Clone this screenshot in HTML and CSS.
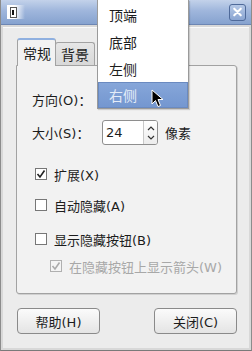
FILE: index.html
```html
<!DOCTYPE html>
<html>
<head>
<meta charset="utf-8">
<link rel="stylesheet" href="styles.css">
</head>
<body>
<div class="window">
  <div class="titlebar">
    <div class="app-icon"><span></span></div>
    <div class="close-btn">
      <svg width="16" height="16" viewBox="0 0 16 16"><path d="M4.5 4.5 L11.5 11.5 M11.5 4.5 L4.5 11.5" stroke="#fff" stroke-width="2.2" stroke-linecap="round"/></svg>
    </div>
  </div>
  <div class="frame">
    <div class="content">
      <div class="tabs">
        <div class="tab active">常规</div>
        <div class="tab">背景</div>
      </div>
      <div class="panel">
        <div class="row r1"><span class="label">方向(O)：</span></div>
        <div class="row r2">
          <span class="label">大小(S)：</span>
          <div class="spin">
            <span class="spin-val">24</span>
            <div class="spin-btns">
              <svg width="12" height="22" viewBox="0 0 12 22"><path d="M3 8 L6 5 L9 8" fill="none" stroke="#333" stroke-width="1.2"/><path d="M3 14 L6 17 L9 14" fill="none" stroke="#333" stroke-width="1.2"/></svg>
            </div>
          </div>
          <span class="unit">像素</span>
        </div>
        <div class="row check r3"><span class="box checked"><svg width="10" height="10" viewBox="0 0 10 10"><path d="M1.5 5 L4 8 L8.5 1.5" fill="none" stroke="#222" stroke-width="1.6"/></svg></span><span>扩展(X)</span></div>
        <div class="row check r4"><span class="box"></span><span>自动隐藏(A)</span></div>
        <div class="row check r5"><span class="box"></span><span>显示隐藏按钮(B)</span></div>
        <div class="row check r6 disabled"><span class="box checked"><svg width="10" height="10" viewBox="0 0 10 10"><path d="M1.5 5 L4 8 L8.5 1.5" fill="none" stroke="#aaa" stroke-width="1.6"/></svg></span><span>在隐藏按钮上显示箭头(W)</span></div>
      </div>
      <div class="buttons">
        <div class="btn">帮助(H)</div>
        <div class="btn">关闭(C)</div>
      </div>
    </div>
  </div>
  <div class="menu">
    <div class="item">顶端</div>
    <div class="item">底部</div>
    <div class="item">左侧</div>
    <div class="item hl">右侧</div>
  </div>
  <svg class="cursor" width="14" height="20" viewBox="0 0 14 20"><path d="M1 1 L1 15 L4.5 11.5 L7 17.5 L9.5 16.5 L7 10.5 L12 10.5 Z" fill="#000" stroke="#fff" stroke-width="1"/></svg>
</div>
</body>
</html>
```
FILE: styles.css
```css
* { box-sizing: border-box; }
html, body { margin: 0; padding: 0; }
body {
  width: 252px;
  height: 351px;
  overflow: hidden;
  font-family: "DejaVu Sans", "Noto Sans CJK SC", sans-serif;
  font-size: 13px;
  color: #1c1c1c;
  background: #ececec;
}
.window {
  position: relative;
  width: 252px;
  height: 351px;
  display: flex;
  flex-direction: column;
  border-left: 1px solid #8c8c8c;
  border-right: 1px solid #8c8c8c;
  border-bottom: 1px solid #7a7a7a;
  background: #e6e6e6;
}
.titlebar {
  height: 25px;
  flex: none;
  background: linear-gradient(#c3d2ea, #9fb6dc 45%, #86a2cf);
  border-bottom: 1px solid #6d86b3;
  display: flex;
  align-items: center;
  justify-content: space-between;
  padding: 0 5px 0 6px;
}
.app-icon {
  width: 18px;
  height: 14px;
  background: linear-gradient(90deg, #ffffff 40%, rgba(255,255,255,0));
  display: flex;
  align-items: center;
  padding-left: 3px;
}
.app-icon span {
  display: block;
  width: 7px;
  height: 11px;
  border: 1px solid #555;
  background: #fff;
  position: relative;
}
.app-icon span::after {
  content: "";
  position: absolute;
  left: 1px;
  top: 2px;
  width: 2px;
  height: 5px;
  background: #111;
}
.close-btn {
  width: 17px;
  height: 17px;
  border: 1px solid #4f6a9a;
  border-radius: 3px;
  background: linear-gradient(#b5c8e6, #8aa5d2);
  display: flex;
  align-items: center;
  justify-content: center;
}
.frame {
  flex: 1;
  padding: 2px 2px 2px 2px;
  display: flex;
  background: #d8d8d8;
}
.content {
  flex: 1;
  background: #ececec;
  border-top: 1px solid #fafafa;
  padding: 10px 11px 0 13px;
  display: flex;
  flex-direction: column;
}
.tabs {
  display: flex;
  align-items: flex-end;
  height: 27px;
  padding-left: 1px;
  position: relative;
  z-index: 1;
}
.tab {
  height: 23px;
  padding: 0 5px;
  border: 1px solid #a2a2a2;
  border-bottom: none;
  border-radius: 3px 3px 0 0;
  background: linear-gradient(#e6e6e6, #d8d8d8);
  display: flex;
  align-items: center;
  font-size: 14px;
}
.tab.active {
  height: 28px;
  margin-bottom: -1px;
  background: #f2f2f2;
  border-top: 2px solid #8fb0e0;
  padding: 0 4px 0 5px;
}
.tab + .tab { margin-left: -1px; }
.panel {
  height: 229px;
  width: 221px;
  background: #f2f2f2;
  border: 1px solid #a2a2a2;
  border-radius: 0 3px 3px 3px;
  box-shadow: 1px 1px 0 #d0d0d0;
  padding: 20px 15px 0 15px;
}
.row {
  display: flex;
  align-items: center;
  white-space: nowrap;
}
.r1 { height: 26px; }
.r2 { height: 25px; margin-top: 8px; }
.r3 { height: 20px; margin-top: 19px; }
.r4 { height: 20px; margin-top: 11px; }
.r5 { height: 20px; margin-top: 14px; }
.r6 { height: 20px; margin-top: 7px; }
.label { width: 70px; }
.spin {
  width: 56px;
  height: 25px;
  border: 1px solid #8e8e8e;
  border-radius: 3px;
  background: #fff;
  display: flex;
  align-items: center;
  justify-content: space-between;
  padding-left: 3px;
}
.spin-btns {
  width: 14px;
  height: 23px;
  border-left: 1px solid #c8c8c8;
  background: linear-gradient(#ffffff, #ececec);
  border-radius: 0 2px 2px 0;
  display: flex;
  align-items: center;
  justify-content: center;
}
.unit { margin-left: 7px; }
.check { padding-left: 3px; }
.check .box {
  width: 12px;
  height: 12px;
  border: 1px solid #777;
  background: #fff;
  margin-right: 7px;
  display: flex;
  align-items: center;
  justify-content: center;
}
.check.disabled { padding-left: 18px; color: #a8a8a8; }
.check.disabled .box { border-color: #b0b0b0; background: #f4f4f4; }
.buttons {
  display: flex;
  justify-content: space-between;
  margin-top: 14px;
  width: 221px;
  padding-left: 1px;
}
.btn {
  width: 83px;
  height: 26px;
  border: 1px solid #8a8a8a;
  border-radius: 4px;
  background: linear-gradient(#fbfbfb, #e4e4e4);
  display: flex;
  align-items: center;
  justify-content: center;
}
.menu {
  position: absolute;
  left: 96px;
  top: 0;
  width: 92px;
  background: #fff;
  border: 1px solid #9a9a9a;
  border-top: none;
  padding-top: 1px;
  box-shadow: 1px 1px 1px rgba(0,0,0,0.15);
  z-index: 5;
}
.item {
  height: 27px;
  padding-left: 11px;
  display: flex;
  align-items: center;
  font-size: 14px;
  color: #1c1c1c;
}
.item.hl {
  height: 26px;
  background: linear-gradient(#86a6d9, #7497d0);
  border: 1px solid #6a8ac0;
  color: #e4ecf8;
  padding-left: 10px;
}
.cursor {
  position: absolute;
  left: 150px;
  top: 89px;
  z-index: 6;
}
```
